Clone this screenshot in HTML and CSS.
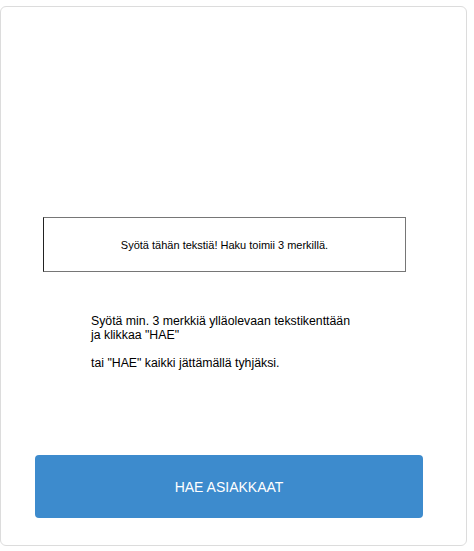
FILE: index.html
```html
<!DOCTYPE html>
<html>
<head>
<meta charset="utf-8">
<link rel="stylesheet" href="styles.css">
</head>
<body>
<div class="card">
  <div class="search-wrap">
    <input class="search" type="text" placeholder="Syötä tähän tekstiä! Haku toimii 3 merkillä.">
  </div>
  <div class="help">
    <p>Syötä min. 3 merkkiä ylläolevaan tekstikenttään<br>ja klikkaa "HAE"</p>
    <p>tai "HAE" kaikki jättämällä tyhjäksi.</p>
  </div>
  <div class="actions">
    <button class="btn">HAE ASIAKKAAT</button>
  </div>
</div>
</body>
</html>
```
FILE: styles.css
```css
html, body {
  margin: 0;
  padding: 0;
  background: #fff;
}
body {
  font-family: "Liberation Sans", Arial, sans-serif;
  color: #000;
}
.card {
  box-sizing: border-box;
  margin-top: 6px;
  width: 467px;
  height: 540px;
  border: 1px solid #dcdcdc;
  border-radius: 6px;
  display: flex;
  flex-direction: column;
}
.search-wrap {
  padding: 210px 0 0 42px;
}
.search {
  box-sizing: border-box;
  display: block;
  width: 363px;
  height: 55px;
  border: 1px solid #767676;
  border-left-color: #222;
  border-radius: 0;
  background: #fff;
  text-align: center;
  font-family: "Liberation Sans", Arial, sans-serif;
  font-size: 11px;
  padding: 0;
  outline: none;
}
.search::placeholder {
  color: #000;
  opacity: 1;
}
.help {
  padding: 42px 0 0 90px;
  font-size: 12.3px;
  line-height: 14px;
}
.help p {
  margin: 0 0 14px 0;
}
.actions {
  padding: 71px 0 0 34px;
}
.btn {
  display: block;
  width: 388px;
  height: 63px;
  border: none;
  border-radius: 4px;
  background: #3d8bcd;
  color: #fff;
  font-family: "Liberation Sans", Arial, sans-serif;
  font-size: 14px;
  padding: 0;
}
```
